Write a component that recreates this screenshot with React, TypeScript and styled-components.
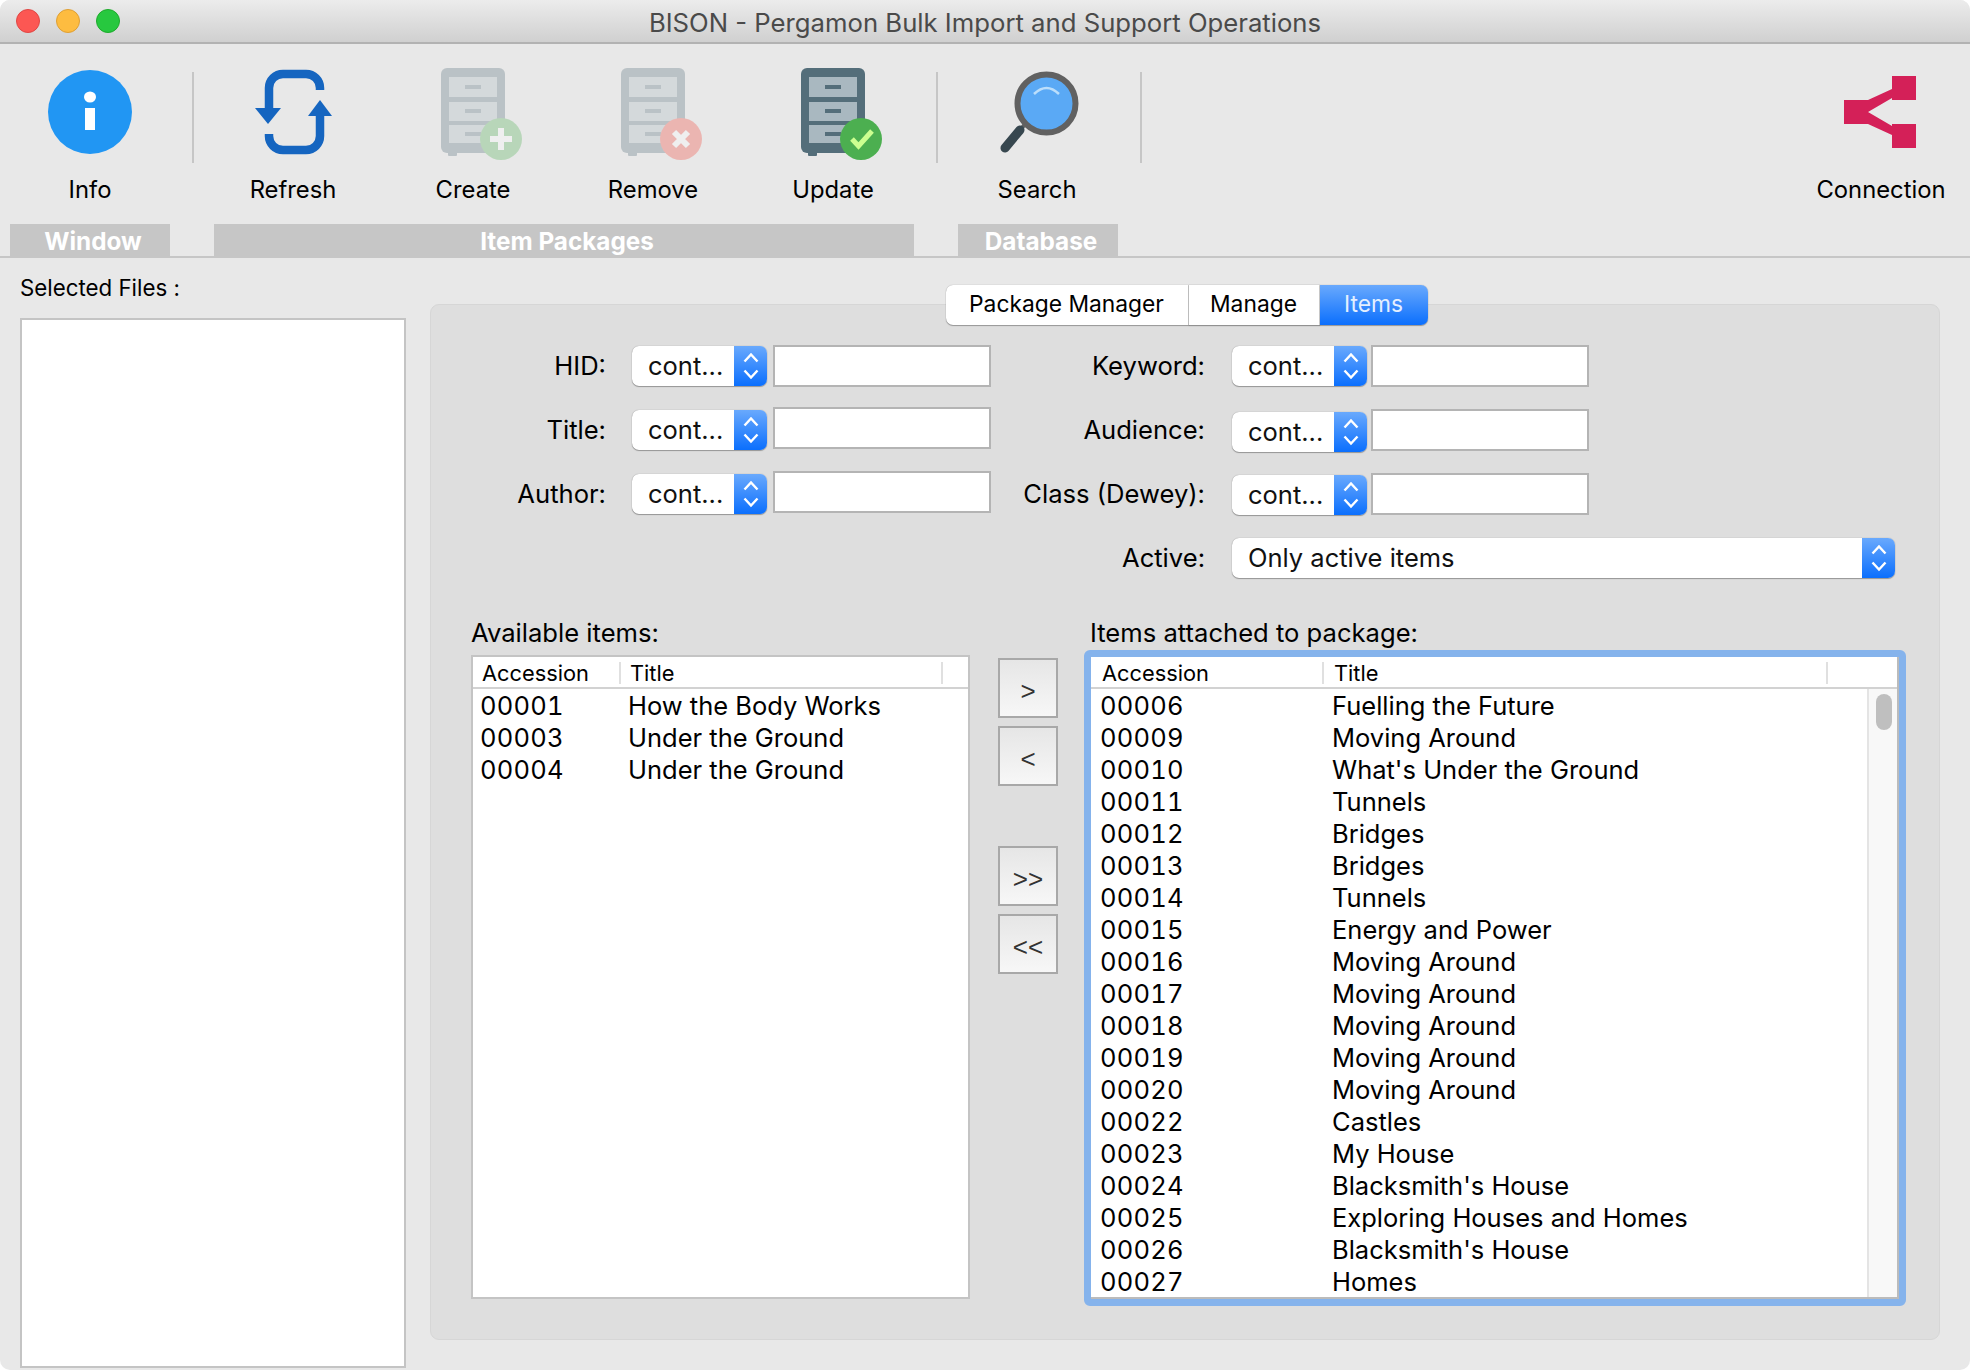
import * as React from 'react';
import styled, { createGlobalStyle } from 'styled-components';

const UI_FONT = `"Inter", "Liberation Sans", sans-serif`;

const GlobalStyle = createGlobalStyle`
  html, body {
    margin: 0;
    padding: 0;
    background: #ffffff;
  }
  * {
    box-sizing: border-box;
  }
`;

const Window = styled.div`
  width: 1970px;
  height: 1370px;
  display: flex;
  flex-direction: column;
  overflow: hidden;
  border-radius: 10px;
  background: #e8e8e8;
  font-family: ${UI_FONT};
  color: #000;
`;

const TitleBar = styled.div`
  height: 44px;
  flex: none;
  display: flex;
  align-items: center;
  position: relative;
  background: linear-gradient(#ececec, #d0d0d0);
  border-bottom: 2px solid #b2b2b2;
`;

const Lights = styled.div`
  display: flex;
  gap: 16px;
  padding-left: 16px;
`;

const Light = styled.span<{ $fill: string; $edge: string }>`
  width: 24px;
  height: 24px;
  border-radius: 50%;
  background: ${p => p.$fill};
  border: 1px solid ${p => p.$edge};
`;

const WindowTitle = styled.div`
  position: absolute;
  left: 0;
  right: 0;
  padding-top: 2px;
  text-align: center;
  font-size: 25.7px;
  color: #4a4a4a;
`;

const Toolbar = styled.div`
  height: 180px;
  flex: none;
  display: flex;
  align-items: flex-start;
`;

const Tool = styled.div<{ $right?: boolean }>`
  width: 180px;
  flex: none;
  padding-top: 20px;
  display: flex;
  flex-direction: column;
  align-items: center;
  ${p => (p.$right ? 'margin-left: auto; width: 178px;' : '')}
`;

const ToolIcon = styled.svg`
  display: block;
  width: 100px;
  height: 100px;
`;

const ToolLabel = styled.div`
  margin-top: 12px;
  height: 28px;
  line-height: 28px;
  font-size: 23.8px;
  white-space: nowrap;
`;

const ToolSep = styled.div<{ $left: number; $right: number }>`
  width: 2px;
  height: 91px;
  flex: none;
  margin: 28px ${p => p.$right}px 0 ${p => p.$left}px;
  background: #c6c6c6;
`;

const SectionBar = styled.div`
  height: 34px;
  flex: none;
  display: flex;
  gap: 44px;
  padding-left: 10px;
  border-bottom: 2px solid #c6c6c6;
`;

const SectionTab = styled.div<{ $width: number }>`
  width: ${p => p.$width}px;
  height: 32px;
  line-height: 34px;
  padding-left: 6px;
  text-align: center;
  background: #c6c6c6;
  color: #fff;
  font-weight: 700;
  font-size: 24.3px;
`;

const Body = styled.div`
  flex: 1;
  min-height: 0;
  display: flex;
  padding-left: 20px;
`;

const FilesPane = styled.div`
  width: 386px;
  flex: none;
  display: flex;
  flex-direction: column;
`;

const FilesLabel = styled.div`
  height: 60px;
  line-height: 60px;
  font-size: 22.3px;
`;

const FilesBox = styled.div`
  height: 1050px;
  flex: none;
  background: #fff;
  border: 2px solid #c4c4c4;
`;

const GroupPanel = styled.div`
  width: 1510px;
  height: 1036px;
  margin: 46px 0 0 24px;
  flex: none;
  padding: 0 33px 0 40px;
  background: #dedede;
  border: 1px solid #d6d6d6;
  border-radius: 9px;
`;

const TabBar = styled.div`
  display: flex;
  justify-content: center;
  margin: -20px -36px 0 -40px;
`;

const Tab = styled.div<{ $width: number; $active?: boolean }>`
  width: ${p => p.$width}px;
  height: 40px;
  line-height: 38px;
  text-align: center;
  font-size: 22.8px;
  background: ${p => (p.$active ? 'linear-gradient(#69a9fd, #0b6ffd)' : '#fff')};
  color: ${p => (p.$active ? '#e4efff' : '#000')};
  box-shadow: 0 1px 1px rgba(0, 0, 0, 0.3), 0 0 1px rgba(0, 0, 0, 0.35);
  border-right: ${p => (p.$active ? 'none' : '1px solid #d4d4d4')};
  &:first-child {
    border-radius: 7px 0 0 7px;
  }
  &:last-child {
    border-radius: 0 7px 7px 0;
  }
`;

const FormGrid = styled.div`
  height: 258px;
  margin-top: 21px;
  display: grid;
  grid-template-columns: 540px 1fr;
  grid-auto-rows: 64px;
`;

const Field = styled.div`
  display: flex;
  align-items: flex-start;
`;

const FieldLabel = styled.div<{ $width: number }>`
  width: ${p => p.$width}px;
  flex: none;
  height: 40px;
  line-height: 40px;
  text-align: right;
  font-size: 25.6px;
  padding-right: ${p => (p.$width > 200 ? 27 : 26)}px;
  white-space: nowrap;
`;

const Select = styled.div<{ $wide?: boolean; $shift?: number }>`
  width: ${p => (p.$wide ? 663 : 135)}px;
  height: 40px;
  flex: none;
  margin-top: ${p => p.$shift ?? 0}px;
  display: flex;
  border-radius: 7px;
  background: #fff;
  box-shadow: 0 1px 1px rgba(0, 0, 0, 0.3), 0 0 1px rgba(0, 0, 0, 0.4);
  overflow: hidden;
`;

const SelectValue = styled.div`
  flex: 1;
  line-height: 40px;
  padding-left: 16px;
  font-size: 25.5px;
  color: #111;
`;

const SelectArrow = styled.div`
  width: 33px;
  flex: none;
  display: flex;
  align-items: center;
  justify-content: center;
  background: linear-gradient(#69a9fd, #0b6ffd);
`;

const TextBox = styled.div<{ $shift: number; $gap: number }>`
  width: 218px;
  height: 42px;
  flex: none;
  margin: ${p => p.$shift}px 0 0 ${p => p.$gap}px;
  background: #fff;
  border: 2px solid #b4b4b4;
`;

const ListsRow = styled.div`
  margin-top: 14px;
  display: flex;
  align-items: flex-start;
`;

const ListColumn = styled.div<{ $width: number }>`
  width: ${p => p.$width}px;
  flex: none;
`;

const ListTitle = styled.div<{ $indent?: number }>`
  height: 30px;
  line-height: 30px;
  padding-left: ${p => p.$indent ?? 0}px;
  font-size: 25.6px;
  white-space: nowrap;
`;

const PlainList = styled.div`
  height: 644px;
  margin-top: 7px;
  background: #fff;
  border: 2px solid #c4c4c4;
  overflow: hidden;
`;

const FocusRing = styled.div`
  height: 656px;
  margin-top: 2px;
  border: 7px solid #85b3ec;
  border-radius: 6px;
  background: #fff;
`;

const FocusInner = styled.div`
  height: 642px;
  display: flex;
  flex-direction: column;
  background: #fff;
  border-right: 2px solid #bbb;
  border-bottom: 2px solid #bbb;
`;

const HeaderRow = styled.div`
  height: 32px;
  flex: none;
  display: flex;
  align-items: center;
  padding-top: 2px;
  border-bottom: 2px solid #d2d2d2;
`;

const HeaderCell = styled.div<{ $width: number; $pad: number }>`
  width: ${p => p.$width}px;
  flex: none;
  height: 22px;
  line-height: 22px;
  padding-left: ${p => p.$pad}px;
  font-size: 21.8px;
  border-right: 2px solid #e0e0e0;
`;

const ListBody = styled.div`
  flex: 1;
  min-height: 0;
  display: flex;
`;

const Rows = styled.div`
  flex: 1;
  padding-top: 1px;
  overflow: hidden;
`;

const Row = styled.div<{ $first: number; $pad: number }>`
  height: 32px;
  line-height: 32px;
  display: grid;
  grid-template-columns: ${p => p.$first}px 1fr;
  padding-left: ${p => p.$pad}px;
  font-size: 25.5px;
  white-space: nowrap;
`;

const Accession = styled.span`
  font-variant-numeric: tabular-nums;
  letter-spacing: 0.2px;
`;

const ScrollTrack = styled.div`
  width: 30px;
  flex: none;
  background: #f8f8f8;
  border-left: 2px solid #e4e4e4;
  display: flex;
  justify-content: center;
  padding: 5px 0 0 2px;
`;

const ScrollThumb = styled.div`
  width: 16px;
  height: 36px;
  border-radius: 8px;
  background: #bfbfbf;
`;

const MoveColumn = styled.div`
  width: 60px;
  flex: none;
  margin: 40px 26px 0 28px;
  display: flex;
  flex-direction: column;
`;

const MoveButton = styled.div<{ $gap?: number }>`
  height: 60px;
  margin-top: ${p => p.$gap ?? 0}px;
  display: flex;
  align-items: center;
  justify-content: center;
  padding-top: 6px;
  font-family: "Liberation Sans", sans-serif;
  font-size: 26px;
  color: #333;
  background: linear-gradient(#e6e6e6, #f7f7f7);
  border: 2px solid #a8a8a8;
`;

function Cabinet({ badge, faded }: { badge: 'plus' | 'cross' | 'check'; faded?: boolean }) {
  const badgeFill = badge === 'cross' ? '#f44336' : '#4caf50';
  return (
    <ToolIcon viewBox="0 0 100 100" opacity={faded ? 0.3 : 1}>
      <rect x="18" y="4" width="64" height="85" rx="6" fill="#546e7a" />
      <rect x="25" y="86" width="9" height="6" rx="1" fill="#546e7a" />
      <rect x="26" y="13" width="48" height="20" fill="#a9b8c0" />
      <rect x="26" y="38" width="48" height="19" fill="#a9b8c0" />
      <rect x="26" y="61" width="48" height="18" fill="#a9b8c0" />
      <rect x="42" y="21" width="16" height="4" fill="#546e7a" />
      <rect x="42" y="45" width="16" height="4" fill="#546e7a" />
      <rect x="42" y="68" width="16" height="4" fill="#546e7a" />
      <circle cx="78" cy="75" r="21" fill={badgeFill} />
      {badge === 'plus' && <path d="M78 64V86M67 75H89" stroke="#fff" strokeWidth="6" />}
      {badge === 'cross' && <path d="M71 68L85 82M85 68L71 82" stroke="#fff" strokeWidth="6" />}
      {badge === 'check' && <path d="M69 75L75.5 82L89 67" fill="none" stroke="#ccff90" strokeWidth="5" />}
    </ToolIcon>
  );
}

function InfoIcon() {
  return (
    <ToolIcon viewBox="0 0 100 100">
      <circle cx="50" cy="48" r="42" fill="#2196f3" />
      <ellipse cx="50" cy="33" rx="6" ry="5.5" fill="#fff" />
      <rect x="45" y="44" width="10" height="22" fill="#fff" />
    </ToolIcon>
  );
}

function RefreshIcon() {
  return (
    <ToolIcon viewBox="0 0 100 100">
      <g fill="none" stroke="#1565c0" strokeWidth="8.5">
        <path d="M77 26V24a14 14 0 0 0-14-14H40a14 14 0 0 0-14 14V46" />
        <path d="M26 70V72a14 14 0 0 0 14 14H63a14 14 0 0 0 14-14V50" />
      </g>
      <path d="M25 60L12 44H38Z" fill="#1565c0" />
      <path d="M77 36L65 52H89Z" fill="#1565c0" />
    </ToolIcon>
  );
}

function SearchIcon() {
  return (
    <ToolIcon viewBox="0 0 100 100">
      <path d="M40 58L33 66" stroke="#616161" strokeWidth="4" />
      <path d="M33 66L18 84" stroke="#37474f" strokeWidth="9" strokeLinecap="round" />
      <circle cx="59.5" cy="39.5" r="29" fill="#5aa9f5" stroke="#616161" strokeWidth="6" />
      <path d="M47 30Q59.5 18 72 30" fill="none" stroke="#bbdefb" strokeWidth="2.5" />
    </ToolIcon>
  );
}

function ConnectionIcon() {
  return (
    <ToolIcon viewBox="0 0 100 100">
      <g fill="#d42058">
        <rect x="61" y="12" width="24" height="24" />
        <rect x="61" y="60" width="24" height="24" />
        <rect x="13" y="36" width="24" height="24" />
        <path d="M37 36L61 25V34L37 48L61 62V71L37 60Z" />
      </g>
    </ToolIcon>
  );
}

function UpDownArrows() {
  return (
    <svg width="16" height="28" viewBox="0 0 16 28">
      <path d="M1.5 9.5L8 2.5L14.5 9.5M1.5 18.5L8 25.5L14.5 18.5" fill="none" stroke="#fff" strokeWidth="2.4" />
    </svg>
  );
}

type ComboProps = { wide?: boolean; shift?: number; value?: string };

function Combo({ wide, shift, value = 'cont...' }: ComboProps) {
  return (
    <Select $wide={wide} $shift={shift}>
      <SelectValue>{value}</SelectValue>
      <SelectArrow>
        <UpDownArrows />
      </SelectArrow>
    </Select>
  );
}

const AVAILABLE: [string, string][] = [
  ['00001', 'How the Body Works'],
  ['00003', 'Under the Ground'],
  ['00004', 'Under the Ground'],
];

const ATTACHED: [string, string][] = [
  ['00006', 'Fuelling the Future'],
  ['00009', 'Moving Around'],
  ['00010', "What's Under the Ground"],
  ['00011', 'Tunnels'],
  ['00012', 'Bridges'],
  ['00013', 'Bridges'],
  ['00014', 'Tunnels'],
  ['00015', 'Energy and Power'],
  ['00016', 'Moving Around'],
  ['00017', 'Moving Around'],
  ['00018', 'Moving Around'],
  ['00019', 'Moving Around'],
  ['00020', 'Moving Around'],
  ['00022', 'Castles'],
  ['00023', 'My House'],
  ['00024', "Blacksmith's House"],
  ['00025', 'Exploring Houses and Homes'],
  ['00026', "Blacksmith's House"],
  ['00027', 'Homes'],
];

function App(): React.JSX.Element {
  return (
    <Window>
      <GlobalStyle />
      <TitleBar>
        <Lights>
          <Light $fill="#fc5753" $edge="#df4744" />
          <Light $fill="#fdbc40" $edge="#de9f34" />
          <Light $fill="#27c83f" $edge="#1eaa2c" />
        </Lights>
        <WindowTitle>BISON - Pergamon Bulk Import and Support Operations</WindowTitle>
      </TitleBar>

      <Toolbar>
        <Tool>
          <InfoIcon />
          <ToolLabel>Info</ToolLabel>
        </Tool>
        <ToolSep $left={12} $right={9} />
        <Tool>
          <RefreshIcon />
          <ToolLabel>Refresh</ToolLabel>
        </Tool>
        <Tool>
          <Cabinet badge="plus" faded />
          <ToolLabel>Create</ToolLabel>
        </Tool>
        <Tool>
          <Cabinet badge="cross" faded />
          <ToolLabel>Remove</ToolLabel>
        </Tool>
        <Tool>
          <Cabinet badge="check" />
          <ToolLabel>Update</ToolLabel>
        </Tool>
        <ToolSep $left={13} $right={9} />
        <Tool>
          <SearchIcon />
          <ToolLabel>Search</ToolLabel>
        </Tool>
        <ToolSep $left={13} $right={0} />
        <Tool $right>
          <ConnectionIcon />
          <ToolLabel>Connection</ToolLabel>
        </Tool>
      </Toolbar>

      <SectionBar>
        <SectionTab $width={160}>Window</SectionTab>
        <SectionTab $width={700}>Item Packages</SectionTab>
        <SectionTab $width={160}>Database</SectionTab>
      </SectionBar>

      <Body>
        <FilesPane>
          <FilesLabel>Selected Files :</FilesLabel>
          <FilesBox />
        </FilesPane>

        <GroupPanel>
          <TabBar>
            <Tab $width={243}>Package Manager</Tab>
            <Tab $width={131}>Manage</Tab>
            <Tab $width={108} $active>
              Items
            </Tab>
          </TabBar>

          <FormGrid>
            <Field>
              <FieldLabel $width={161}>HID:</FieldLabel>
              <Combo />
              <TextBox $shift={-1} $gap={6} />
            </Field>
            <Field>
              <FieldLabel $width={221}>Keyword:</FieldLabel>
              <Combo />
              <TextBox $shift={-1} $gap={4} />
            </Field>
            <Field>
              <FieldLabel $width={161}>Title:</FieldLabel>
              <Combo />
              <TextBox $shift={-3} $gap={6} />
            </Field>
            <Field>
              <FieldLabel $width={221}>Audience:</FieldLabel>
              <Combo shift={2} />
              <TextBox $shift={-1} $gap={4} />
            </Field>
            <Field>
              <FieldLabel $width={161}>Author:</FieldLabel>
              <Combo />
              <TextBox $shift={-3} $gap={6} />
            </Field>
            <Field>
              <FieldLabel $width={221}>Class (Dewey):</FieldLabel>
              <Combo shift={1} />
              <TextBox $shift={-1} $gap={4} />
            </Field>
            <div />
            <Field>
              <FieldLabel $width={221}>Active:</FieldLabel>
              <Combo wide value="Only active items" />
            </Field>
          </FormGrid>

          <ListsRow>
            <ListColumn $width={499}>
              <ListTitle>Available items:</ListTitle>
              <PlainList>
                <HeaderRow>
                  <HeaderCell $width={148} $pad={9}>Accession</HeaderCell>
                  <HeaderCell $width={322} $pad={9}>Title</HeaderCell>
                </HeaderRow>
                <Rows>
                  {AVAILABLE.map(([id, title]) => (
                    <Row key={id} $first={148} $pad={7}>
                      <Accession>{id}</Accession>
                      <span>{title}</span>
                    </Row>
                  ))}
                </Rows>
              </PlainList>
            </ListColumn>

            <MoveColumn>
              <MoveButton>&gt;</MoveButton>
              <MoveButton $gap={8}>&lt;</MoveButton>
              <MoveButton $gap={60}>&gt;&gt;</MoveButton>
              <MoveButton $gap={8}>&lt;&lt;</MoveButton>
            </MoveColumn>

            <ListColumn $width={822}>
              <ListTitle $indent={6}>Items attached to package:</ListTitle>
              <FocusRing>
                <FocusInner>
                  <HeaderRow>
                    <HeaderCell $width={233} $pad={11}>Accession</HeaderCell>
                    <HeaderCell $width={504} $pad={10}>Title</HeaderCell>
                  </HeaderRow>
                  <ListBody>
                    <Rows>
                      {ATTACHED.map(([id, title]) => (
                        <Row key={id} $first={232} $pad={9}>
                          <Accession>{id}</Accession>
                          <span>{title}</span>
                        </Row>
                      ))}
                    </Rows>
                    <ScrollTrack>
                      <ScrollThumb />
                    </ScrollTrack>
                  </ListBody>
                </FocusInner>
              </FocusRing>
            </ListColumn>
          </ListsRow>
        </GroupPanel>
      </Body>
    </Window>
  );
}

export default App;
